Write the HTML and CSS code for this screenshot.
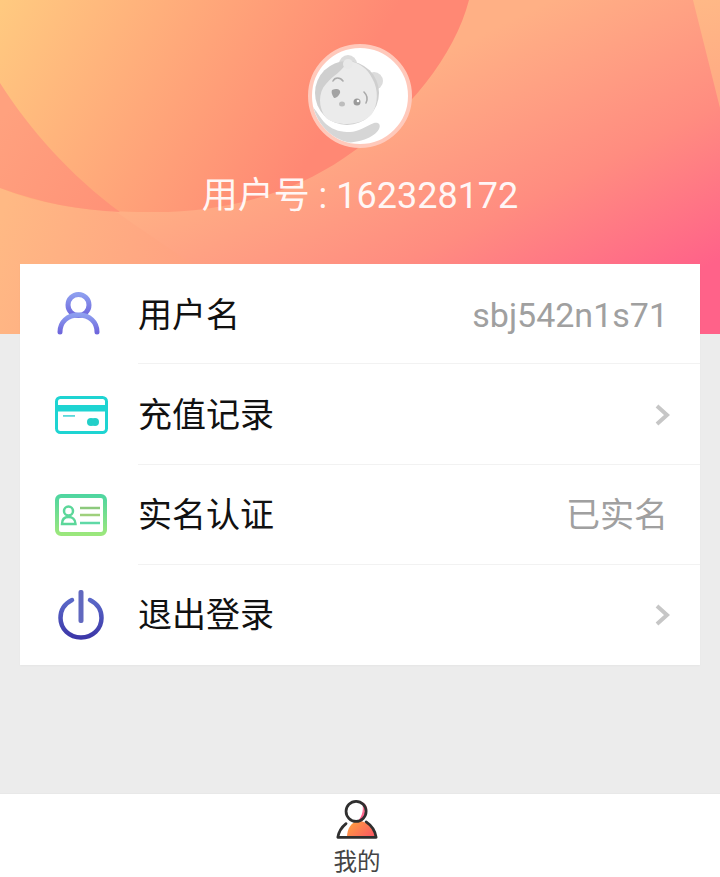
FILE: index.html
```html
<!DOCTYPE html>
<html lang="zh-CN">
<head>
    <meta charset="UTF-8">
    <meta name="viewport" content="width=device-width, initial-scale=1.0">
    <title>我的</title>
    <link rel="stylesheet" href="styles.css">
</head>
<body>
    <div class="page">
        <header class="banner">
            <!-- background shapes -->
            <svg class="banner-bg" viewBox="0 0 720 334" preserveAspectRatio="none" aria-hidden="true">
                <defs>
                    <linearGradient id="bgBase" gradientUnits="userSpaceOnUse" x1="430" y1="60" x2="568" y2="336">
                        <stop offset="0" stop-color="#ffb085"/>
                        <stop offset="0.55" stop-color="#ff8c80"/>
                        <stop offset="1" stop-color="#ff6289"/>
                    </linearGradient>
                    <linearGradient id="bgLower" gradientUnits="userSpaceOnUse" x1="0" y1="220" x2="260" y2="300">
                        <stop offset="0" stop-color="#ffb984"/>
                        <stop offset="1" stop-color="#ff9880"/>
                    </linearGradient>
                    <linearGradient id="bgBlob" gradientUnits="userSpaceOnUse" x1="0" y1="0" x2="300" y2="175">
                        <stop offset="0" stop-color="#ffca80"/>
                        <stop offset="1" stop-color="#ff8874"/>
                    </linearGradient>
                    <linearGradient id="bgWedge" gradientUnits="userSpaceOnUse" x1="0" y1="120" x2="130" y2="205">
                        <stop offset="0" stop-color="#ffa17e"/>
                        <stop offset="1" stop-color="#ff9177"/>
                    </linearGradient>
                    <linearGradient id="bgCorner" gradientUnits="userSpaceOnUse" x1="700" y1="0" x2="720" y2="110">
                        <stop offset="0" stop-color="#ffb886"/>
                        <stop offset="1" stop-color="#ffa883"/>
                    </linearGradient>
                </defs>
                <rect width="720" height="334" fill="url(#bgBase)"/>
                <path d="M118 213 C170 250 225 285 300 334 L0 334 L0 185 Z" fill="url(#bgLower)"/>
                <path d="M0 0 H469 C455 55 408 115 344 158 C290 195 220 213 150 212 C90 212 40 205 0 188 Z" fill="url(#bgBlob)"/>
                <path d="M0 83 C30 130 70 175 120 212 C80 210 40 203 0 188 Z" fill="url(#bgWedge)"/>
                <path d="M693 0 H720 V108 Z" fill="url(#bgCorner)"/>
            </svg>

            <div class="avatar">
                <svg viewBox="0 0 96 96" width="96" height="96" aria-hidden="true">
                    <!-- arm -->
                    <path d="M0 58 C4 62 8 70 14 76 C22 83 30 84 38 84 C46 84 54 78 62 75 C67 74 69 77 67 81 C62 90 46 95 30 95 C16 92 4 80 0 58 Z" fill="#d6d6d6"/>
                    <!-- ears and head -->
                    <circle cx="36" cy="16" r="9" fill="#dcdcdc"/>
                    <circle cx="62" cy="33" r="9" fill="#dcdcdc"/>
                    <circle cx="35" cy="45" r="32" fill="#cfcfcf"/>
                    <path d="M36 13 C48 14 56 22 60 30 C67 42 66 56 60 66 C50 78 26 79 14 70 C6 60 6 44 14 36 C20 28 30 24 36 13 Z" fill="#ebebeb"/>
                    <circle cx="36" cy="16" r="5" fill="#e9e9e9"/>
                    <!-- face -->
                    <path d="M21 33 C23 29 28 29 31 33" fill="none" stroke="#ababab" stroke-width="1.6" stroke-linecap="round"/>
                    <path d="M20 42 C24 40 29 41 28 45 C27 48 24 50 22 50 C20 47 19 44 20 42 Z" fill="#a3a3a3"/>
                    <ellipse cx="30" cy="56" rx="3" ry="2.500" fill="#bdbdbd"/>
                    <circle cx="45" cy="54" r="3.500" fill="#9a9a9a"/>
                    <circle cx="46" cy="53" r="1.300" fill="#ffffff"/>
                    <path d="M52 44 C55 47 56 51 54 55" fill="none" stroke="#a9a9a9" stroke-width="1.6" stroke-linecap="round"/>
                </svg>
            </div>
            <p class="user-no">用户号 : 162328172</p>
        </header>

        <main class="main">
            <ul class="card">
                <li class="row">
                    <span class="row-icon">
                        <svg viewBox="2.5 0 48 48" width="48" height="48" aria-hidden="true">
                            <defs>
                                <linearGradient id="icoUser" x1="0" y1="0" x2="0" y2="1">
                                    <stop offset="0" stop-color="#8d9eef"/>
                                    <stop offset="1" stop-color="#6f67dc"/>
                                </linearGradient>
                            </defs>
                            <g fill="none" stroke="url(#icoUser)" stroke-width="5" stroke-linecap="round">
                                <circle cx="24" cy="14" r="10.500"/>
                                <path d="M5.500 41 C5.500 31 13 24 24 24 C35 24 42.500 31 42.500 41"/>
                            </g>
                        </svg>
                    </span>
                    <span class="row-label">用户名</span>
                    <span class="row-value">sbj542n1s71</span>
                </li>
                <li class="row">
                    <span class="row-icon">
                        <svg viewBox="0 0 53 38" width="53" height="38" aria-hidden="true">
                            <rect x="1.500" y="1.500" width="50" height="35" rx="4" fill="none" stroke="#1ed4d2" stroke-width="3"/>
                            <rect x="2" y="9" width="49" height="6.500" fill="#1ed4d2"/>
                            <rect x="8" y="19" width="12" height="1.800" fill="#5bd9db"/>
                            <circle cx="36" cy="26" r="4" fill="#22cfc8"/>
                            <circle cx="40" cy="26" r="4" fill="#22cfc8"/>
                        </svg>
                    </span>
                    <span class="row-label">充值记录</span>
                    <svg class="chevron" viewBox="0 0 16 24" width="16" height="24" aria-hidden="true">
                        <path d="M3 3 L13 12 L3 21" fill="none" stroke="#c6c6c6" stroke-width="4"/>
                    </svg>
                </li>
                <li class="row">
                    <span class="row-icon">
                        <svg viewBox="0 0 52 42" width="52" height="42" aria-hidden="true">
                            <defs>
                                <linearGradient id="icoId" x1="0" y1="0" x2="0" y2="1">
                                    <stop offset="0" stop-color="#50d6a0"/>
                                    <stop offset="1" stop-color="#9be77c"/>
                                </linearGradient>
                            </defs>
                            <rect x="2" y="2" width="48" height="38" rx="4" fill="none" stroke="url(#icoId)" stroke-width="4"/>
                            <g fill="none" stroke="#5cd79a" stroke-width="2.500">
                                <circle cx="13.500" cy="17" r="4.500"/>
                                <path d="M7 30 C7 25 10 23 13.500 23 C17 23 20.500 25 20.500 30 Z"/>
                            </g>
                            <g fill="none" stroke-width="2.500">
                                <path d="M25 14 H45" stroke="#8cc97c"/>
                                <path d="M25 21 H45" stroke="#9fd07c"/>
                                <path d="M25 29 H45" stroke="#5fd9a6"/>
                            </g>
                        </svg>
                    </span>
                    <span class="row-label">实名认证</span>
                    <span class="row-value">已实名</span>
                </li>
                <li class="row">
                    <span class="row-icon">
                        <svg viewBox="0 0 46 50" width="46" height="50" aria-hidden="true">
                            <defs>
                                <linearGradient id="icoPower" x1="0" y1="0" x2="0" y2="1">
                                    <stop offset="0" stop-color="#5a68c8"/>
                                    <stop offset="1" stop-color="#3c37a8"/>
                                </linearGradient>
                            </defs>
                            <path d="M14 10 C7 13.500 2.500 20 2.500 28 C2.500 39 11.500 47.500 23 47.500 C34.500 47.500 43.500 39 43.500 28 C43.500 20 39 13.500 32 10" fill="none" stroke="url(#icoPower)" stroke-width="4.500" stroke-linecap="round"/>
                            <rect x="20.500" y="0" width="5" height="33" rx="2" fill="#6168bf"/>
                        </svg>
                    </span>
                    <span class="row-label">退出登录</span>
                    <svg class="chevron" viewBox="0 0 16 24" width="16" height="24" aria-hidden="true">
                        <path d="M3 3 L13 12 L3 21" fill="none" stroke="#c6c6c6" stroke-width="4"/>
                    </svg>
                </li>
            </ul>
        </main>

        <nav class="tabbar">
            <svg viewBox="0 0 46 46" width="46" height="46" aria-hidden="true">
                <defs>
                    <linearGradient id="tabBody" x1="0" y1="0" x2="1" y2="0.6">
                        <stop offset="0" stop-color="#ffa63c"/>
                        <stop offset="1" stop-color="#fb5d60"/>
                    </linearGradient>
                    <linearGradient id="tabHead" x1="0" y1="1" x2="1" y2="0">
                        <stop offset="0" stop-color="#ff3d7a"/>
                        <stop offset="1" stop-color="#ff9aa8"/>
                    </linearGradient>
                </defs>
                <path d="M12 42 C12 32 17 25 24 24 C36 24 43 33 44 42 Z" fill="url(#tabBody)"/>
                <path d="M28 3 C33 5 35 9 34 14 C33 19 30 22 24 24 C29 19 31 10 28 3 Z" fill="url(#tabHead)"/>
                <circle cx="22" cy="13.500" r="11" fill="none" stroke="#2f2f2f" stroke-width="3"/>
                <path d="M2 42 C3 36 6 31 11 27 M2 42 H44 C43 35 39 29 33 25" fill="none" stroke="#2f2f2f" stroke-width="3" stroke-linecap="round" stroke-linejoin="round"/>
            </svg>
            <span class="tab-label">我的</span>
        </nav>
    </div>
</body>
</html>
```

FILE: styles.css
```css
html, body {
    margin: 0;
    padding: 0;
    height: 100%;
}
body {
    font-family: Roboto, "Noto Sans CJK SC", sans-serif;
    background-color: #ececec;
    overflow: hidden;
}
.page {
    display: flex;
    flex-direction: column;
    height: 100vh;
    overflow: hidden;
}

/* banner */
.banner {
    position: relative;
    flex: none;
    height: 334px;
    display: flex;
    flex-direction: column;
    align-items: center;
    box-sizing: border-box;
    padding-top: 44px;
}
.banner-bg {
    position: absolute;
    top: 0;
    left: 0;
    width: 100%;
    height: 100%;
}
.avatar {
    position: relative;
    width: 96px;
    height: 96px;
    border: 4px solid #ffc9bb;
    border-radius: 50%;
    background-color: #fff;
    overflow: hidden;
}
.avatar svg {
    display: block;
}
.user-no {
    position: relative;
    margin: 24px 0 0;
    font-size: 36px;
    line-height: 48px;
    color: #fff;
    opacity: 0.92;
}

/* list */
.main {
    flex: 1;
    min-height: 0;
    padding: 0 20px;
}
.card {
    position: relative;
    list-style: none;
    margin: -70px 0 0;
    padding: 0;
    background-color: #fff;
    box-shadow: 0 1px 2px rgba(0, 0, 0, 0.03);
}
.row {
    position: relative;
    display: flex;
    align-items: center;
    height: 100.25px;
    box-sizing: border-box;
    padding-right: 30px;
    padding-top: 1px;
}
.row + .row::before {
    content: "";
    position: absolute;
    top: -1px;
    left: 118px;
    right: 0;
    height: 1px;
    background-color: #f2f2f2;
}
.row-icon {
    flex: none;
    width: 118px;
    box-sizing: border-box;
    padding-left: 4px;
    display: flex;
    justify-content: center;
}
.row-icon svg {
    display: block;
}
.row-label {
    flex: 1;
    font-size: 34px;
    line-height: 48px;
    color: #111;
}
.row-value {
    font-size: 34px;
    line-height: 48px;
    color: #a0a0a0;
    margin-right: 2px;
}
.chevron {
    display: block;
}

/* bottom tab */
.tabbar {
    flex: none;
    height: 84px;
    box-sizing: border-box;
    border-top: 1px solid #e8e8e8;
    background-color: #fff;
    display: flex;
    flex-direction: column;
    align-items: center;
    padding-top: 5px;
    padding-right: 6px;
}
.tabbar svg {
    display: block;
}
.tab-label {
    margin-top: 6px;
    font-size: 23.5px;
    line-height: 30px;
    color: #444;
}
```
